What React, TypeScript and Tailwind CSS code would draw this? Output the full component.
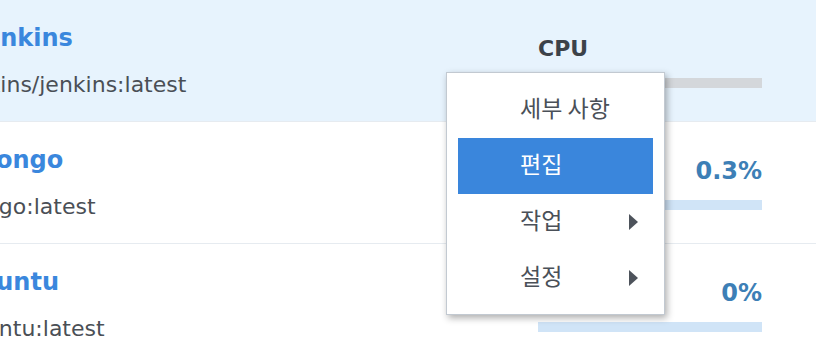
import React from "react";

type Row = {
  name: string;
  image: string;
  nameShift: string;
  imageShift: string;
  kind: "label" | "value";
  text: string;
  bar: string;
  selected?: boolean;
};

const rows: Row[] = [
  { name: "Jenkins", image: "jenkins/jenkins:latest", nameShift: "-ml-[25px]", imageShift: "-ml-[46px]", kind: "label", text: "CPU", bar: "bg-[#d4d7db]", selected: true },
  { name: "mongo", image: "mongo:latest", nameShift: "-ml-[29px]", imageShift: "-ml-[50px]", kind: "value", text: "0.3%", bar: "bg-[#d0e4f7]" },
  { name: "ubuntu", image: "ubuntu:latest", nameShift: "-ml-[38px]", imageShift: "-ml-[43px]", kind: "value", text: "0%", bar: "bg-[#d0e4f7]" },
];

const menu = [
  { label: "세부 사항", sub: false, active: false },
  { label: "편집", sub: false, active: true },
  { label: "작업", sub: true, active: false },
  { label: "설정", sub: true, active: false },
];

function Caret() {
  return (
    <svg width="9" height="16" viewBox="0 0 9 16">
      <path d="M0 0 L9 8 L0 16 Z" fill="#4d535b" />
    </svg>
  );
}

export default function App() {
  return (
    <div
      className="relative w-[816px] h-[352px] overflow-hidden bg-white"
      style={{ fontFamily: '"DejaVu Sans", "Noto Sans CJK KR", sans-serif' }}
    >
      {rows.map((r) => (
        <div
          key={r.name}
          className={`flex h-[122px] border-b border-[#e6ebf0] ${r.selected ? "bg-[#e7f3fd]" : "bg-white"}`}
        >
          {/* Name + image */}
          <div className="flex-1 min-w-0 overflow-hidden pt-[24px]">
            <div className={`${r.nameShift} text-[24px] leading-[28px] font-bold text-[#3a87dd] whitespace-nowrap`}>
              {r.name}
            </div>
            <div className={`${r.imageShift} mt-[20px] text-[22px] leading-[26px] text-[#4a4f56] whitespace-nowrap`}>
              {r.image}
            </div>
          </div>

          {/* CPU column */}
          <div className="w-[224px] mr-[54px] pt-[36px] flex flex-col">
            {r.kind === "label" ? (
              <div className="text-[22px] leading-[26px] font-bold text-[#3c4249]">{r.text}</div>
            ) : (
              <div className="text-[24px] leading-[26px] font-bold text-right text-[#3d7fb6]">{r.text}</div>
            )}
            <div className={`mt-[16px] h-[10px] w-full ${r.bar}`} />
          </div>
        </div>
      ))}

      {/* Context menu */}
      <div className="absolute left-[446px] top-[72px] w-[219px] h-[243px] bg-white border border-[#c2c9d1] shadow-[2px_3px_7px_rgba(0,0,0,0.32)] pt-[9px] px-[11px]">
        {menu.map((m) => (
          <div
            key={m.label}
            className={`flex items-center justify-between h-[56px] pl-[62px] pr-[15px] text-[23px] ${
              m.active ? "bg-[#3a86dc] text-white" : "text-[#4a5058]"
            }`}
            style={{ fontFamily: '"Noto Sans CJK KR", sans-serif' }}
          >
            <span className="mb-[6px]">{m.label}</span>
            {m.sub && <Caret />}
          </div>
        ))}
      </div>
    </div>
  );
}
